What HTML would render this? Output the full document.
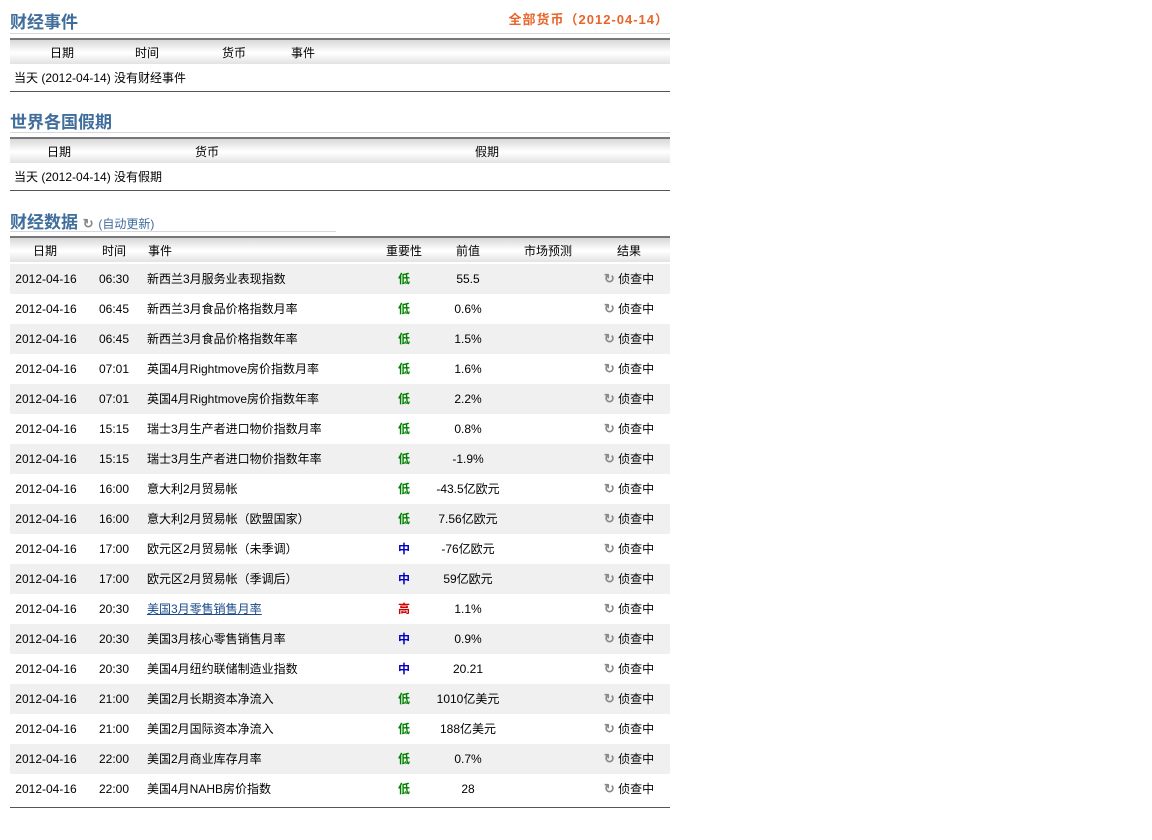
<!DOCTYPE html><html><head><meta charset="utf-8"><style>
body{margin:0;width:1152px;height:840px;background:#fff;font-family:"Liberation Sans","Noto Sans CJK SC",sans-serif;font-size:12px;line-height:14px;color:#000;position:relative;overflow:hidden}
.a{position:absolute;white-space:nowrap}
.t{font-size:17px;line-height:20px;font-weight:bold;color:#3f6d9c;left:10px}
.ln{position:absolute;left:10px;width:660px;height:1px;background:#d8d8d8}
.hd{position:absolute;left:10px;width:660px;height:24px;border-top:2px solid #777;background:linear-gradient(#d8d8d8,#fafafa 45%,#fff 55%,#e2e2e2)}
.hd span,.r span{position:absolute;top:6px;transform:translateX(-50%);white-space:nowrap}
.bb{position:absolute;left:10px;width:660px;height:1px;background:#555}
.r{position:absolute;left:10px;width:660px;height:30px}
.r span{top:8px}
.r:nth-child(odd){background:#f0f0f0}
.l{color:#008000;font-weight:bold}.m{color:#0000c0;font-weight:bold}.h{color:#d00000;font-weight:bold}
.ic{color:#888;font-size:13px}
</style></head><body>
<div class="a t" style="top:13px">财经事件</div>
<div class="a" style="right:483px;top:13px;color:#e8652a;font-weight:bold;font-size:13px;letter-spacing:1px">全部货币（2012-04-14）</div>
<div class="ln" style="top:33px"></div>
<div class="hd" style="top:38px"><span style="left:52px">日期</span><span style="left:137px">时间</span><span style="left:224px">货币</span><span style="left:293px">事件</span></div>
<div class="a" style="left:14px;top:71px">当天 (2012-04-14) 没有财经事件</div>
<div class="bb" style="top:91px"></div>

<div class="a t" style="top:113px">世界各国假期</div>
<div class="ln" style="top:132px"></div>
<div class="hd" style="top:137px"><span style="left:49px">日期</span><span style="left:197px">货币</span><span style="left:477px">假期</span></div>
<div class="a" style="left:14px;top:170px">当天 (2012-04-14) 没有假期</div>
<div class="bb" style="top:190px"></div>

<div class="a t" style="top:213px">财经数据 <span style="color:#888;font-size:13px">↻</span> <span style="font-size:12px;font-weight:normal;color:#3f6d9c">(自动更新)</span></div>
<div class="ln" style="top:231px;width:326px"></div>
<div class="hd" style="top:236px"><span style="left:35px">日期</span><span style="left:104px">时间</span><span style="left:138px;transform:none">事件</span><span style="left:394px">重要性</span><span style="left:458px">前值</span><span style="left:538px">市场预测</span><span style="left:619px">结果</span></div>
<div id="rows" style="position:absolute;left:0;top:264px">
<div class="r" style="top:0"><span style="left:36px">2012-04-16</span><span style="left:104px">06:30</span><span style="left:137px;transform:none">新西兰3月服务业表现指数</span><span class="l" style="left:394px">低</span><span style="left:458px">55.5</span><span style="left:619px"><b class="ic">↻</b> 侦查中</span></div>
<div class="r" style="top:30px"><span style="left:36px">2012-04-16</span><span style="left:104px">06:45</span><span style="left:137px;transform:none">新西兰3月食品价格指数月率</span><span class="l" style="left:394px">低</span><span style="left:458px">0.6%</span><span style="left:619px"><b class="ic">↻</b> 侦查中</span></div>
<div class="r" style="top:60px"><span style="left:36px">2012-04-16</span><span style="left:104px">06:45</span><span style="left:137px;transform:none">新西兰3月食品价格指数年率</span><span class="l" style="left:394px">低</span><span style="left:458px">1.5%</span><span style="left:619px"><b class="ic">↻</b> 侦查中</span></div>
<div class="r" style="top:90px"><span style="left:36px">2012-04-16</span><span style="left:104px">07:01</span><span style="left:137px;transform:none">英国4月Rightmove房价指数月率</span><span class="l" style="left:394px">低</span><span style="left:458px">1.6%</span><span style="left:619px"><b class="ic">↻</b> 侦查中</span></div>
<div class="r" style="top:120px"><span style="left:36px">2012-04-16</span><span style="left:104px">07:01</span><span style="left:137px;transform:none">英国4月Rightmove房价指数年率</span><span class="l" style="left:394px">低</span><span style="left:458px">2.2%</span><span style="left:619px"><b class="ic">↻</b> 侦查中</span></div>
<div class="r" style="top:150px"><span style="left:36px">2012-04-16</span><span style="left:104px">15:15</span><span style="left:137px;transform:none">瑞士3月生产者进口物价指数月率</span><span class="l" style="left:394px">低</span><span style="left:458px">0.8%</span><span style="left:619px"><b class="ic">↻</b> 侦查中</span></div>
<div class="r" style="top:180px"><span style="left:36px">2012-04-16</span><span style="left:104px">15:15</span><span style="left:137px;transform:none">瑞士3月生产者进口物价指数年率</span><span class="l" style="left:394px">低</span><span style="left:458px">-1.9%</span><span style="left:619px"><b class="ic">↻</b> 侦查中</span></div>
<div class="r" style="top:210px"><span style="left:36px">2012-04-16</span><span style="left:104px">16:00</span><span style="left:137px;transform:none">意大利2月贸易帐</span><span class="l" style="left:394px">低</span><span style="left:458px">-43.5亿欧元</span><span style="left:619px"><b class="ic">↻</b> 侦查中</span></div>
<div class="r" style="top:240px"><span style="left:36px">2012-04-16</span><span style="left:104px">16:00</span><span style="left:137px;transform:none">意大利2月贸易帐（欧盟国家）</span><span class="l" style="left:394px">低</span><span style="left:458px">7.56亿欧元</span><span style="left:619px"><b class="ic">↻</b> 侦查中</span></div>
<div class="r" style="top:270px"><span style="left:36px">2012-04-16</span><span style="left:104px">17:00</span><span style="left:137px;transform:none">欧元区2月贸易帐（未季调）</span><span class="m" style="left:394px">中</span><span style="left:458px">-76亿欧元</span><span style="left:619px"><b class="ic">↻</b> 侦查中</span></div>
<div class="r" style="top:300px"><span style="left:36px">2012-04-16</span><span style="left:104px">17:00</span><span style="left:137px;transform:none">欧元区2月贸易帐（季调后）</span><span class="m" style="left:394px">中</span><span style="left:458px">59亿欧元</span><span style="left:619px"><b class="ic">↻</b> 侦查中</span></div>
<div class="r" style="top:330px"><span style="left:36px">2012-04-16</span><span style="left:104px">20:30</span><span style="left:137px;transform:none;color:#1a4a8a;text-decoration:underline">美国3月零售销售月率</span><span class="h" style="left:394px">高</span><span style="left:458px">1.1%</span><span style="left:619px"><b class="ic">↻</b> 侦查中</span></div>
<div class="r" style="top:360px"><span style="left:36px">2012-04-16</span><span style="left:104px">20:30</span><span style="left:137px;transform:none">美国3月核心零售销售月率</span><span class="m" style="left:394px">中</span><span style="left:458px">0.9%</span><span style="left:619px"><b class="ic">↻</b> 侦查中</span></div>
<div class="r" style="top:390px"><span style="left:36px">2012-04-16</span><span style="left:104px">20:30</span><span style="left:137px;transform:none">美国4月纽约联储制造业指数</span><span class="m" style="left:394px">中</span><span style="left:458px">20.21</span><span style="left:619px"><b class="ic">↻</b> 侦查中</span></div>
<div class="r" style="top:420px"><span style="left:36px">2012-04-16</span><span style="left:104px">21:00</span><span style="left:137px;transform:none">美国2月长期资本净流入</span><span class="l" style="left:394px">低</span><span style="left:458px">1010亿美元</span><span style="left:619px"><b class="ic">↻</b> 侦查中</span></div>
<div class="r" style="top:450px"><span style="left:36px">2012-04-16</span><span style="left:104px">21:00</span><span style="left:137px;transform:none">美国2月国际资本净流入</span><span class="l" style="left:394px">低</span><span style="left:458px">188亿美元</span><span style="left:619px"><b class="ic">↻</b> 侦查中</span></div>
<div class="r" style="top:480px"><span style="left:36px">2012-04-16</span><span style="left:104px">22:00</span><span style="left:137px;transform:none">美国2月商业库存月率</span><span class="l" style="left:394px">低</span><span style="left:458px">0.7%</span><span style="left:619px"><b class="ic">↻</b> 侦查中</span></div>
<div class="r" style="top:510px"><span style="left:36px">2012-04-16</span><span style="left:104px">22:00</span><span style="left:137px;transform:none">美国4月NAHB房价指数</span><span class="l" style="left:394px">低</span><span style="left:458px">28</span><span style="left:619px"><b class="ic">↻</b> 侦查中</span></div>
</div>
<div class="bb" style="top:807px"></div>
</body></html>
